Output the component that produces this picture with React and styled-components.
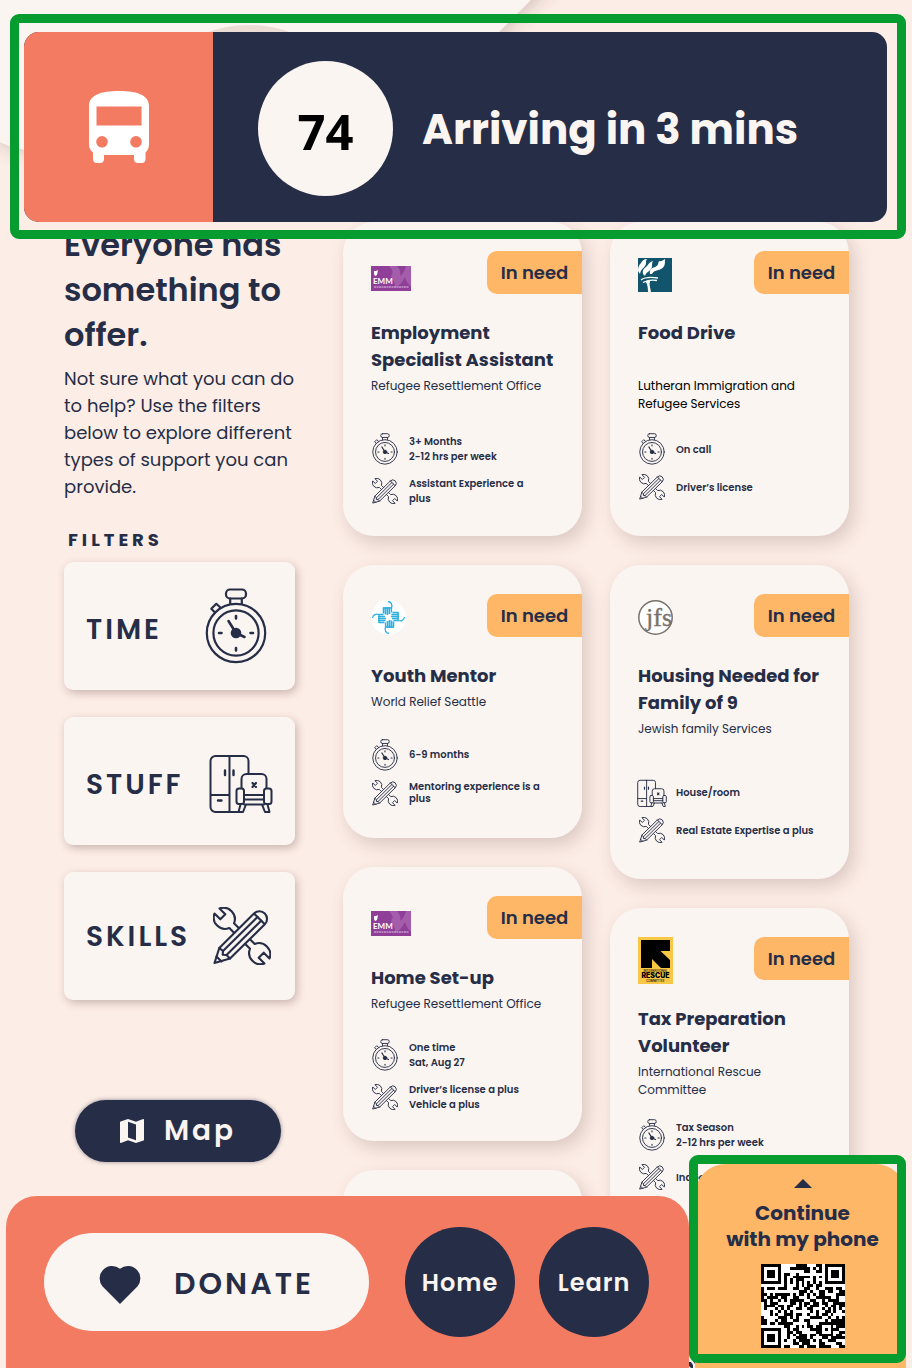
import React from "react";
import styled, { createGlobalStyle } from "styled-components";

const navy = "#262d47";
const cream = "#faf5f1";
const coral = "#f27b62";
const amber = "#feb667";
const green = "#079c30";

const GlobalStyle = createGlobalStyle`
  *, *::before, *::after { box-sizing: border-box; }
  body {
    margin: 0;
    background: #fcede6;
    color: ${navy};
    font-family: Poppins, Inter, "Liberation Sans", sans-serif;
  }
  h1, h2, h3, p, ul { margin: 0; padding: 0; }
  ul { list-style: none; }
  button { font: inherit; color: inherit; border: 0; cursor: pointer; }
  a { color: inherit; text-decoration: none; }
  svg { display: block; flex: none; }
`;

/* ---------- Layout ---------- */

const Screen = styled.div`
  position: relative;
  height: 100vh;
  overflow: hidden;
`;

const Backdrop = styled.svg`
  position: absolute;
  top: 0;
  left: 0;
`;

const Main = styled.main`
  position: relative;
  display: flex;
  gap: 48px;
  padding: 222px 63px 0 64px;
`;

const Sidebar = styled.aside`
  flex: 0 0 231px;
  min-width: 0;
  display: flex;
  flex-direction: column;
`;

const Board = styled.section`
  flex: 1;
  display: grid;
  grid-template-columns: 1fr 1fr;
  gap: 28px;
  align-items: start;
`;

const Column = styled.div`
  display: flex;
  flex-direction: column;
  gap: 29px;
  min-width: 0;
`;

/* ---------- Arrival banner ---------- */

const BannerFrame = styled.header`
  position: absolute;
  z-index: 2;
  top: 14px;
  left: 10px;
  right: 6px;
  padding: 9px 10px 8px 5px;
  border: 9px solid ${green};
  border-radius: 9px;
`;

const Banner = styled.div`
  display: flex;
  align-items: center;
  height: 190px;
  overflow: hidden;
  border-radius: 15px;
  background: ${navy};
`;

const BusTile = styled.div`
  display: flex;
  align-items: center;
  justify-content: center;
  align-self: stretch;
  width: 189px;
  background: ${coral};
`;

const RouteNumber = styled.div`
  display: flex;
  align-items: center;
  justify-content: center;
  width: 135px;
  height: 135px;
  margin: 2px 0 0 45px;
  padding-top: 6px;
  border-radius: 50%;
  background: ${cream};
  color: #000;
  font: 700 49px/60px "Noto Sans", sans-serif;
`;

const Arrival = styled.p`
  padding-top: 6px;
  margin-left: 29px;
  color: ${cream};
  font-size: 42px;
  line-height: 60px;
  font-weight: 700;
  white-space: nowrap;
`;

/* ---------- Sidebar ---------- */

const Heading = styled.h1`
  font-size: 32px;
  line-height: 45px;
  font-weight: 600;
  white-space: nowrap;
`;

const Intro = styled.p`
  margin-top: 8px;
  font-size: 18px;
  line-height: 27px;
  white-space: nowrap;
`;

const FilterTitle = styled.h2`
  margin: 26px 0 9px 4px;
  font-size: 18px;
  line-height: 27px;
  font-weight: 700;
  letter-spacing: 4px;
`;

const FilterList = styled.div`
  display: flex;
  flex-direction: column;
  gap: 27px;
`;

const FilterButton = styled.button`
  display: flex;
  align-items: center;
  justify-content: space-between;
  height: 128px;
  padding: 0 ${(p) => p.$inset}px 0 22px;
  border-radius: 9px;
  background: ${cream};
  box-shadow: 2px 3px 9px rgba(90, 50, 50, 0.3);
  font-size: 28px;
  line-height: 40px;
  font-weight: 600;
  letter-spacing: 3px;
`;

const FilterLabel = styled.span`
  padding-top: ${(p) => (p.$low ? 8 : 2)}px;
`;

const MapButton = styled.button`
  display: flex;
  align-items: center;
  justify-content: center;
  gap: 20px;
  width: 206px;
  height: 62px;
  margin: 100px 0 0 11px;
  border-radius: 31px;
  background: ${navy};
  box-shadow: 0 0 4px rgba(38, 45, 71, 0.5);
  color: ${cream};
  font-size: 28px;
  line-height: 40px;
  font-weight: 600;
  letter-spacing: 3px;
`;

/* ---------- Cards ---------- */

const CardBox = styled.article`
  min-height: ${(p) => (p.$tall ? 314 : 273)}px;
  padding: 29px 0 28px 28px;
  border-radius: 31px;
  background: ${cream};
  box-shadow: 5px 7px 18px rgba(90, 50, 50, 0.2);
`;

const CardTop = styled.div`
  display: flex;
  align-items: center;
  justify-content: space-between;
  height: 47px;
  margin-bottom: 21px;
`;

const Badge = styled.span`
  align-self: flex-start;
  width: 95px;
  border-radius: 10px 0 0 10px;
  background: ${amber};
  font-size: 18px;
  line-height: 43px;
  font-weight: 600;
  text-align: center;
`;

const CardTitle = styled.h3`
  min-height: ${(p) => (p.$roomy ? 54 : 27)}px;
  font-size: 18px;
  line-height: 27px;
  font-weight: 700;
  white-space: nowrap;
`;

const Organisation = styled.p`
  margin-top: 4px;
  color: ${(p) => (p.$dark ? "#000" : navy)};
  font-size: 12px;
  line-height: 18px;
  white-space: nowrap;
`;

const Needs = styled.ul`
  display: flex;
  flex-direction: column;
  gap: ${(p) => p.$gap}px;
  margin-top: ${(p) => p.$space}px;
`;

const Need = styled.li`
  display: flex;
  align-items: center;
  gap: 10px;
  height: 32px;
  font-size: 10px;
  line-height: ${(p) => (p.$tight ? 12 : 15)}px;
  font-weight: 600;
  white-space: nowrap;
`;

const NeedIcon = styled.span`
  display: flex;
  justify-content: center;
  width: 28px;
`;

/* ---------- Bottom dock ---------- */

const Dock = styled.footer`
  position: absolute;
  z-index: 2;
  left: 6px;
  right: 6px;
  bottom: 0;
  display: flex;
  align-items: flex-end;
`;

const Bar = styled.nav`
  flex: 1;
  display: flex;
  align-items: center;
  height: 172px;
  padding-left: 38px;
  border-radius: 31px 31px 0 0;
  background: ${coral};
`;

const DonateButton = styled.button`
  display: flex;
  align-items: center;
  justify-content: center;
  gap: 33px;
  width: 325px;
  height: 98px;
  margin-right: 36px;
  padding: 4px 0 0;
  border-radius: 49px;
  background: ${cream};
  font-size: 30px;
  line-height: 40px;
  font-weight: 600;
  letter-spacing: 3px;
`;

const RoundLink = styled.a`
  display: flex;
  align-items: center;
  justify-content: center;
  width: 110px;
  height: 110px;
  margin-right: 24px;
  padding-top: 2px;
  border-radius: 50%;
  background: ${navy};
  color: ${cream};
  font-size: 24px;
  line-height: 36px;
  font-weight: 600;
  letter-spacing: 1px;
`;

const Phone = styled.section`
  position: relative;
  width: 217px;
  padding: 9px 0 0 6px;

  &::after {
    content: "";
    position: absolute;
    inset: 0 0 5px 0;
    border: 9px solid ${green};
    border-radius: 9px;
  }
`;

const PhoneEdge = styled.svg`
  position: absolute;
  left: 0;
  bottom: 0;
`;

const PhonePanel = styled.div`
  display: flex;
  flex-direction: column;
  align-items: center;
  gap: 12px;
  height: 204px;
  padding: 15px 0 0 4px;
  border-radius: 31px 31px 0 0;
  background: ${amber};
`;

const PhoneText = styled.p`
  font-size: 20px;
  line-height: 26px;
  font-weight: 700;
  text-align: center;
  white-space: nowrap;
`;

/* ---------- Icons ---------- */

const BusIcon = () => (
  <svg width="60" height="72" viewBox="0 0 60 72" fill="#fff" fillRule="evenodd" aria-hidden="true">
    <path d="M0 15C0 4 12 0 30 0s30 4 30 15v38c0 4-1 6-3.500 8.500V68a4 4 0 0 1-4 4H49a4 4 0 0 1-4-4v-4H15v4a4 4 0 0 1-4 4H8a4 4 0 0 1-4-4v-6.500C1 59 0 57 0 53ZM7.500 15.500v19h45v-19ZM13 45a5.800 5.800 0 1 0 0 11.600A5.800 5.800 0 0 0 13 45Zm34 0a5.800 5.800 0 1 0 0 11.600A5.800 5.800 0 0 0 47 45Z" />
  </svg>
);

const Stopwatch = ({ width = 62 }) => (
  <svg width={width} height={Math.round((width * 76) / 62)} viewBox="0 0 62 76" fill="none" stroke={navy} strokeWidth="2.2" strokeLinecap="round" strokeLinejoin="round" aria-hidden="true">
    <rect x="21" y="1.5" width="20" height="9" rx="4" />
    <path d="M25.2 10.500v5M36.800 10.500v5" />
    <path d="M10 24.500 6.300 20.800l5-5 4.600 4.200" />
    <circle cx="31" cy="45" r="29.2" />
    <circle cx="31" cy="45" r="22.6" />
    <path strokeWidth="2.6" d="M31 28v2.500M31 60v2.500M14 45h2.500M45.500 45H48M23.500 33l7.500 12 8.500 4" />
    <circle cx="31" cy="45" r="4.2" fill={navy} />
  </svg>
);

const Furniture = ({ width = 64 }) => (
  <svg width={width} height={width} viewBox="0 -6 64 64" fill="none" stroke={navy} strokeWidth="2" strokeLinecap="round" strokeLinejoin="round" aria-hidden="true">
    <path d="M39.500 18.500V6a5 5 0 0 0-5-5H6.500a5 5 0 0 0-5 5v46a5 5 0 0 0 5 5H30M20.500 1v56M1.500 40h19" />
    <path d="M16 15.500v4.500M24.500 15.500v4.500M9 45.500h3.500" strokeWidth="2.4" />
    <path d="M32.500 33V24a5 5 0 0 1 5-5h15a5 5 0 0 1 5 5v9" />
    <path d="m43.500 28 3.500 4m0-4-3.500 4" strokeWidth="2.2" />
    <rect x="27.5" y="33.5" width="7.5" height="15.5" rx="2.5" />
    <rect x="55" y="33.5" width="7.5" height="15.5" rx="2.5" />
    <path d="M35 40h20M35 44.500h20M35 49.500h20M31.500 49.500 29.500 57h4.500l3-7.500M58.500 49.500 60.500 57H56l-3-7.500" />
  </svg>
);

const Tools = ({ width = 58 }) => (
  <svg width={width} height={width} viewBox="0 0 58 58" fill="none" stroke={navy} strokeWidth="2.1" strokeLinecap="round" strokeLinejoin="round" aria-hidden="true">
    <path d="M25.500 20.800 21 16.300A11.300 11.300 0 0 0 6.500 1.500l5.800 5.800-5 5-5.800-5.800A11.300 11.300 0 0 0 16.300 21l4.500 4.500" />
    <path d="M32.500 37.200 37 41.700A11.300 11.300 0 0 0 51.500 56.500l-5.800-5.800 5-5 5.800 5.800A11.300 11.300 0 0 0 41.700 37l-4.500-4.500" />
    <path d="M41 6.500a7.600 7.600 0 0 1 10.800 10.800L17 51.500 1.500 56 6.300 41ZM41 6.500l10.800 10.800" />
    <path d="m44.500 10-34.500 34M48.200 13.700 13.500 48M6.300 41l3.700 3-.3 3.800 3.800.2 3.500 3.500M3.500 49.500l5 5" />
  </svg>
);

const MapIcon = () => (
  <svg width="24" height="24" viewBox="3 3 18 18" fill={cream} aria-hidden="true">
    <path d="M20.500 3l-.16.030L15 5.100 9 3 3.360 4.900c-.21.070-.36.250-.36.480V20.500c0 .28.220.5.500.5l.16-.030L9 18.900l6 2.100 5.640-1.900c.21-.070.36-.250.36-.480V3.500c0-.28-.220-.5-.5-.5zM15 19l-6-2.110V5l6 2.110V19z" />
  </svg>
);

const Heart = () => (
  <svg width="42" height="39" viewBox="0 0 42 39" fill={navy} aria-hidden="true">
    <path d="M21 39 3.600 21.500A12.500 12.500 0 0 1 21 3.700 12.500 12.500 0 0 1 38.400 21.500Z" />
  </svg>
);

const icons = { time: Stopwatch, stuff: Furniture, skills: Tools };
const smallWidth = { time: 26, stuff: 30, skills: 26 };

/* ---------- Partner logos ---------- */

const EmmLogo = () => (
  <svg width="40" height="33" viewBox="0 0 40 33" role="img" aria-label="EMM">
    <rect y="8" width="40" height="25" fill="#8f3f98" />
    <path d="M18 8h8c3 3 4 7 3 10 3-2 5-6 6-10h5v21c-3-3-5-6-6-10-2 5-6 9-10 10 1-6-6-10-3-13 2-3-1-5-3-8Z" fill="#a35dab" />
    <path d="M3 13h2l2-1-1 5-2 1-1-2Z" fill="#fff" />
    <text x="2" y="26" fill="#fff" fontSize="8" fontWeight="700" fontFamily="Lato, sans-serif">EMM</text>
    <path d="M3 29h35" stroke="#e3c6e6" strokeWidth="1" strokeDasharray="2 .5" />
  </svg>
);

const TorchLogo = () => (
  <svg width="34" height="34" viewBox="0 0 34 34" role="img" aria-label="Lutheran Immigration and Refugee Services">
    <rect width="34" height="34" fill="#12546c" />
    <g fill="#fff">
      <path d="M0 13c0-4 1-6 3-8 1-2 3-4 6-4-2 3 0 4-2 7s-4 3-5 8Z" />
      <path d="M5 16c-1-5 2-6 4-8s2-4 6-5c-2 4 0 5-2 8s-5 3-6 7Z" />
      <path d="M12 16c-1-5 2-6 5-7s3-3 4-6c2 1 4-1 6-2 0 5 0 8-4 10s-7 1-9 5Z" />
      <path d="M6 23c3 1 4 5 4 11h3c-1-5-2-8-1-11Z" />
    </g>
    <path d="M3 22c4-3 10-3 17-2M5 24.500c4-2 9-3 14-2" stroke="#fff" strokeWidth="1.3" fill="none" />
  </svg>
);

const HandsLogo = () => (
  <svg width="35" height="35" viewBox="0 0 35 35" role="img" aria-label="World Relief">
    <circle cx="17.5" cy="17.5" r="17.5" fill="#fff" />
    {[0, 90, 180, 270].map((turn) => (
      <g key={turn} transform={`rotate(${turn} 17.5 17.5)`} stroke="#2bb0e0" fill="none">
        <path d="M12.500 7.500v6M14.500 7v7.500M16.500 7v8M18.500 7v7" strokeWidth="1.6" />
        <path d="M12 8h8.500c1-3 0-6-3.500-6.500M20.500 8v4.500" strokeWidth="1.3" />
      </g>
    ))}
  </svg>
);

const JfsLogo = () => (
  <svg width="35" height="35" viewBox="0 0 35 35" role="img" aria-label="jfs">
    <circle cx="17.5" cy="17.5" r="16.7" fill="#fff" stroke="#79716b" strokeWidth="1.5" />
    <text x="8" y="26" fill="#79716b" stroke="#79716b" strokeWidth=".4" fontSize="26" fontFamily="Liberation Serif, serif">jfs</text>
  </svg>
);

const IrcLogo = () => (
  <svg width="35" height="47" viewBox="0 0 35 47" role="img" aria-label="International Rescue Committee">
    <rect width="35" height="47" fill="#f8c746" />
    <path d="M3 3h29v11h-9.500l9.500 9v8h-9L14 22v9H3Z" fill="#000" />
    <g fontFamily="Inter, sans-serif" textAnchor="middle">
      <text x="17.5" y="35" fontSize="3" fontWeight="500">INTERNATIONAL</text>
      <text x="17.5" y="40.5" fontSize="7" fontWeight="900">RESCUE</text>
      <text x="17.5" y="45" fontSize="3" fontWeight="500">COMMITTEE</text>
    </g>
  </svg>
);

/* ---------- QR code ---------- */

const qrSize = 29;

function finderCell(x, y) {
  const edge = Math.max(Math.abs(x - 3), Math.abs(y - 3));
  return edge === 3 || edge <= 1;
}

function dataCell(x, y) {
  let h = Math.imul(x + 37, 374761393) ^ Math.imul(y + 11, 668265263);
  h = Math.imul(h ^ (h >>> 13), 1274126177);
  h ^= h >>> 16;
  return (h >>> 0) % 100 < 51;
}

function qrPath() {
  let path = "";
  for (let y = 0; y < qrSize; y += 1) {
    for (let x = 0; x < qrSize; x += 1) {
      let on = dataCell(x, y);
      const fx = x > 20 ? 28 - x : x;
      const fy = y > 20 ? 28 - y : y;
      if (fx < 8 && fy < 8 && !(x > 20 && y > 20)) {
        on = fx < 7 && fy < 7 && finderCell(fx, fy);
      } else if (Math.abs(x - 22) < 3 && Math.abs(y - 22) < 3) {
        on = Math.max(Math.abs(x - 22), Math.abs(y - 22)) !== 1;
      } else if (x === 6 || y === 6) {
        on = (x + y) % 2 === 0;
      }
      if (on) path += `M${x} ${y}h1v1h-1z`;
    }
  }
  return path;
}

const QrCode = () => (
  <svg width="84" height="84" viewBox="0 0 29 29" role="img" aria-label="QR code">
    <rect width="29" height="29" fill="#fff" />
    <path d={qrPath()} fill="#000" shapeRendering="crispEdges" />
  </svg>
);

/* ---------- Data ---------- */

const filters = [
  { label: "TIME", icon: "time", inset: 28, low: true },
  { label: "STUFF", icon: "stuff", inset: 22, low: true },
  { label: "SKILLS", icon: "skills", inset: 24 },
];

const columns = [
  [
    {
      logo: EmmLogo, title: ["Employment", "Specialist Assistant"], org: ["Refugee Resettlement Office"],
      tall: true, space: 38, gap: 10,
      needs: [["time", "3+ Months", "2-12 hrs per week"], ["skills", "Assistant Experience a", "plus"]],
    },
    {
      logo: HandsLogo, title: ["Youth Mentor"], org: ["World Relief Seattle"],
      space: 28, gap: 6, tight: true,
      needs: [["time", "6-9 months"], ["skills", "Mentoring experience is a", "plus"]],
    },
    {
      logo: EmmLogo, title: ["Home Set-up"], org: ["Refugee Resettlement Office"],
      space: 26, gap: 10,
      needs: [["time", "One time", "Sat, Aug 27"], ["skills", "Driver’s license a plus", "Vehicle a plus"]],
    },
    null,
  ],
  [
    {
      logo: TorchLogo, title: ["Food Drive"], org: ["Lutheran Immigration and", "Refugee Services"],
      tall: true, roomy: true, dark: true, space: 20, gap: 6,
      needs: [["time", "On call"], ["skills", "Driver’s license"]],
    },
    {
      logo: JfsLogo, title: ["Housing Needed for", "Family of 9"], org: ["Jewish family Services"],
      tall: true, space: 38, gap: 6,
      needs: [["stuff", "House/room"], ["skills", "Real Estate Expertise a plus"]],
    },
    {
      logo: IrcLogo, title: ["Tax Preparation", "Volunteer"], org: ["International Rescue", "Committee"],
      tall: true, space: 20, gap: 10,
      needs: [["time", "Tax Season", "2-12 hrs per week"], ["skills", "Indoor"]],
    },
  ],
];

const Lines = ({ items }) =>
  items.map((item, i) => (
    <React.Fragment key={item}>
      {i > 0 && <br />}
      {item}
    </React.Fragment>
  ));

function Card({ card }) {
  const Logo = card.logo;
  return (
    <CardBox $tall={card.tall}>
      <CardTop>
        <Logo />
        <Badge>In need</Badge>
      </CardTop>
      <CardTitle $roomy={card.roomy}><Lines items={card.title} /></CardTitle>
      <Organisation $dark={card.dark}><Lines items={card.org} /></Organisation>
      <Needs $space={card.space} $gap={card.gap}>
        {card.needs.map(([kind, ...text]) => {
          const Icon = icons[kind];
          return (
            <Need key={kind} $tight={card.tight}>
              <NeedIcon><Icon width={smallWidth[kind]} /></NeedIcon>
              <span><Lines items={text} /></span>
            </Need>
          );
        })}
      </Needs>
    </CardBox>
  );
}

export default function App() {
  return (
    <Screen>
      <GlobalStyle />
      <Backdrop width="600" height="200" viewBox="0 0 600 200" aria-hidden="true">
        <defs>
          <filter id="soft" x="-10%" y="-10%" width="130%" height="130%">
            <feDropShadow dx="4" dy="5" stdDeviation="8" floodColor="#5a3232" floodOpacity="0.2" />
          </filter>
          <linearGradient id="arc" x1="0" y1="0" x2="0" y2="1">
            <stop offset="0" stopColor="#ecdcd6" />
            <stop offset="1" stopColor="#f8e8e1" />
          </linearGradient>
        </defs>
        <path d="M-60-60H590L400 132Q370 150 330 150H60Q24 154 0 142L-60 90Z" fill={cream} filter="url(#soft)" />
        <circle cx="249" cy="147" r="122" fill="url(#arc)" />
      </Backdrop>

      <BannerFrame>
        <Banner>
          <BusTile><BusIcon /></BusTile>
          <RouteNumber>74</RouteNumber>
          <Arrival>Arriving in 3 mins</Arrival>
        </Banner>
      </BannerFrame>

      <Main>
        <Sidebar>
          <Heading><Lines items={["Everyone has", "something to", "offer."]} /></Heading>
          <Intro>
            <Lines items={["Not sure what you can do", "to help? Use the filters", "below to explore different", "types of support you can", "provide."]} />
          </Intro>
          <FilterTitle>FILTERS</FilterTitle>
          <FilterList>
            {filters.map(({ label, icon, inset, low }) => {
              const Icon = icons[icon];
              return (
                <FilterButton key={label} type="button" $inset={inset}>
                  <FilterLabel $low={low}>{label}</FilterLabel>
                  <Icon />
                </FilterButton>
              );
            })}
          </FilterList>
          <MapButton type="button"><MapIcon />Map</MapButton>
        </Sidebar>
        <Board>
          {columns.map((cards, c) => (
            <Column key={c}>
              {cards.map((card, i) => (card ? <Card key={i} card={card} /> : <CardBox key={i} />))}
            </Column>
          ))}
        </Board>
      </Main>

      <Dock>
        <Bar>
          <DonateButton type="button"><Heart />DONATE</DonateButton>
          <RoundLink href="#home">Home</RoundLink>
          <RoundLink href="#learn">Learn</RoundLink>
        </Bar>
        <Phone>
          <PhoneEdge width="6" height="10" viewBox="0 0 6 10" aria-hidden="true">
            <rect width="6" height="10" fill={cream} />
            <path d="M0 4h2l2 3v3H2L0 8ZM4 3h2v3Z" fill={navy} />
          </PhoneEdge>
          <PhonePanel>
            <svg width="18" height="9" viewBox="0 0 18 9" aria-hidden="true"><path d="M9 0 18 9H0Z" fill={navy} /></svg>
            <PhoneText><Lines items={["Continue", "with my phone"]} /></PhoneText>
            <QrCode />
          </PhonePanel>
        </Phone>
      </Dock>
    </Screen>
  );
}
